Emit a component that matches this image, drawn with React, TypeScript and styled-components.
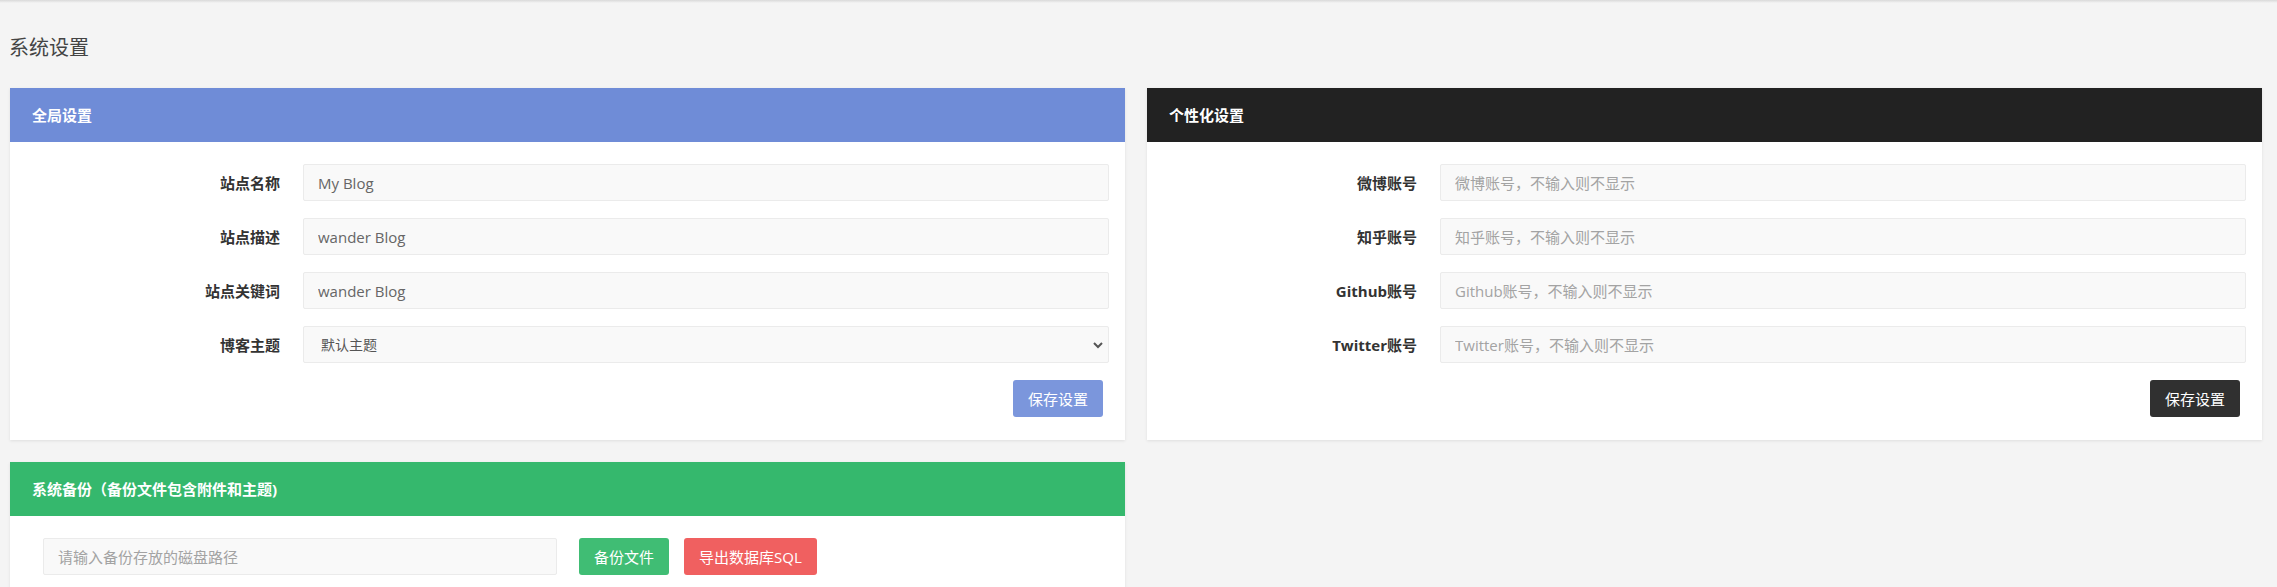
import React from "react";
import styled, { createGlobalStyle } from "styled-components";

const GlobalStyle = createGlobalStyle`
  html, body {
    margin: 0;
    padding: 0;
    background: #f4f4f4;
    font-family: "Open Sans", "Noto Sans CJK SC", sans-serif;
  }
  * { box-sizing: border-box; }
`;

const TopShadow = styled.div`
  height: 3px;
  background: linear-gradient(#d9d9d9, #f4f4f4);
`;

const Page = styled.div`
  padding: 0 15px 0 10px;
`;

const PageTitle = styled.h3`
  margin: 31px 0 26px -1px;
  font-size: 20px;
  line-height: 28px;
  font-weight: 400;
  color: #444;
`;

const Grid = styled.div`
  display: grid;
  grid-template-columns: 1fr 1fr;
  column-gap: 22px;
  row-gap: 22px;
  align-items: start;
`;

const Panel = styled.section`
  background: #fff;
  box-shadow: 0 1px 3px rgba(0, 0, 0, 0.09);
`;

const PanelHeader = styled.div<{ $bg: string }>`
  height: 54px;
  padding: 0 22px;
  display: flex;
  align-items: center;
  background: ${(p) => p.$bg};
  color: #fff;
  font-size: 15px;
  font-weight: 700;
  line-height: 20px;
`;

const FormBody = styled.div`
  padding: 22px 16px 23px 0;
  display: flex;
  flex-direction: column;
  gap: 17px;
`;

const FormRow = styled.div`
  display: grid;
  grid-template-columns: 270px 1fr;
  column-gap: 23px;
  align-items: center;
`;

const Label = styled.label`
  text-align: right;
  font-size: 15px;
  font-weight: 700;
  color: #333;
  line-height: 20px;
`;

const TextInput = styled.input`
  width: 100%;
  height: 37px;
  padding: 0 14px;
  border: 1px solid #ebebeb;
  border-radius: 2px;
  background: #f9f9f9;
  font-family: inherit;
  font-size: 15px;
  color: #666;
  outline: none;
  &::placeholder {
    color: #a3a3a3;
  }
`;

const SelectWrap = styled.div`
  position: relative;
`;

const Select = styled.select`
  width: 100%;
  height: 37px;
  padding: 0 17px;
  border: 1px solid #ebebeb;
  border-radius: 2px;
  background: #f9f9f9;
  font-family: inherit;
  font-size: 14px;
  color: #555;
  appearance: none;
  -webkit-appearance: none;
  outline: none;
`;

const Chevron = styled.svg`
  position: absolute;
  right: 6px;
  top: 50%;
  transform: translateY(-50%);
  pointer-events: none;
`;

const Actions = styled.div`
  display: flex;
  justify-content: flex-end;
  padding-right: 6px;
`;

const Button = styled.button<{ $bg: string }>`
  height: 37px;
  padding: 0 15px;
  border: none;
  border-radius: 3px;
  background: ${(p) => p.$bg};
  color: #fff;
  font-family: inherit;
  font-size: 15px;
  line-height: 20px;
  white-space: nowrap;
  cursor: pointer;
`;

const BackupBody = styled.div`
  padding: 22px 0 22px 33px;
  display: flex;
  align-items: center;
`;

const BackupInput = styled(TextInput)`
  width: 514px;
  margin-right: 22px;
`;

const ButtonGroup = styled.div`
  display: flex;
  gap: 15px;
`;

type Field = { label: string; value?: string; placeholder?: string };

const globalFields: Field[] = [
  { label: "站点名称", value: "My Blog" },
  { label: "站点描述", value: "wander Blog" },
  { label: "站点关键词", value: "wander Blog" },
];

const socialFields: Field[] = [
  { label: "微博账号", placeholder: "微博账号，不输入则不显示" },
  { label: "知乎账号", placeholder: "知乎账号，不输入则不显示" },
  { label: "Github账号", placeholder: "Github账号，不输入则不显示" },
  { label: "Twitter账号", placeholder: "Twitter账号，不输入则不显示" },
];

function FieldRow({ label, value, placeholder }: Field) {
  return (
    <FormRow>
      <Label>{label}</Label>
      {value !== undefined ? (
        <TextInput value={value} readOnly />
      ) : (
        <TextInput placeholder={placeholder} />
      )}
    </FormRow>
  );
}

export default function App() {
  return (
    <>
      <GlobalStyle />
      <TopShadow />
      <Page>
        <PageTitle>系统设置</PageTitle>
        <Grid>
          <Panel>
            <PanelHeader $bg="#6f8cd7">全局设置</PanelHeader>
            <FormBody>
              {globalFields.map((f) => (
                <FieldRow key={f.label} {...f} />
              ))}
              <FormRow>
                <Label>博客主题</Label>
                <SelectWrap>
                  <Select defaultValue="default">
                    <option value="default">默认主题</option>
                  </Select>
                  <Chevron width="10" height="8" viewBox="0 0 10 8">
                    <path d="M1 2 L5 6 L9 2" fill="none" stroke="#555" strokeWidth="2" />
                  </Chevron>
                </SelectWrap>
              </FormRow>
              <Actions>
                <Button $bg="#7b96dc">保存设置</Button>
              </Actions>
            </FormBody>
          </Panel>
          <Panel>
            <PanelHeader $bg="#222222">个性化设置</PanelHeader>
            <FormBody>
              {socialFields.map((f) => (
                <FieldRow key={f.label} {...f} />
              ))}
              <Actions>
                <Button $bg="#303030">保存设置</Button>
              </Actions>
            </FormBody>
          </Panel>
          <Panel>
            <PanelHeader $bg="#35b86d">系统备份（备份文件包含附件和主题)</PanelHeader>
            <BackupBody>
              <BackupInput placeholder="请输入备份存放的磁盘路径" />
              <ButtonGroup>
                <Button $bg="#40bd74">备份文件</Button>
                <Button $bg="#f06060">导出数据库SQL</Button>
              </ButtonGroup>
            </BackupBody>
          </Panel>
        </Grid>
      </Page>
    </>
  );
}
